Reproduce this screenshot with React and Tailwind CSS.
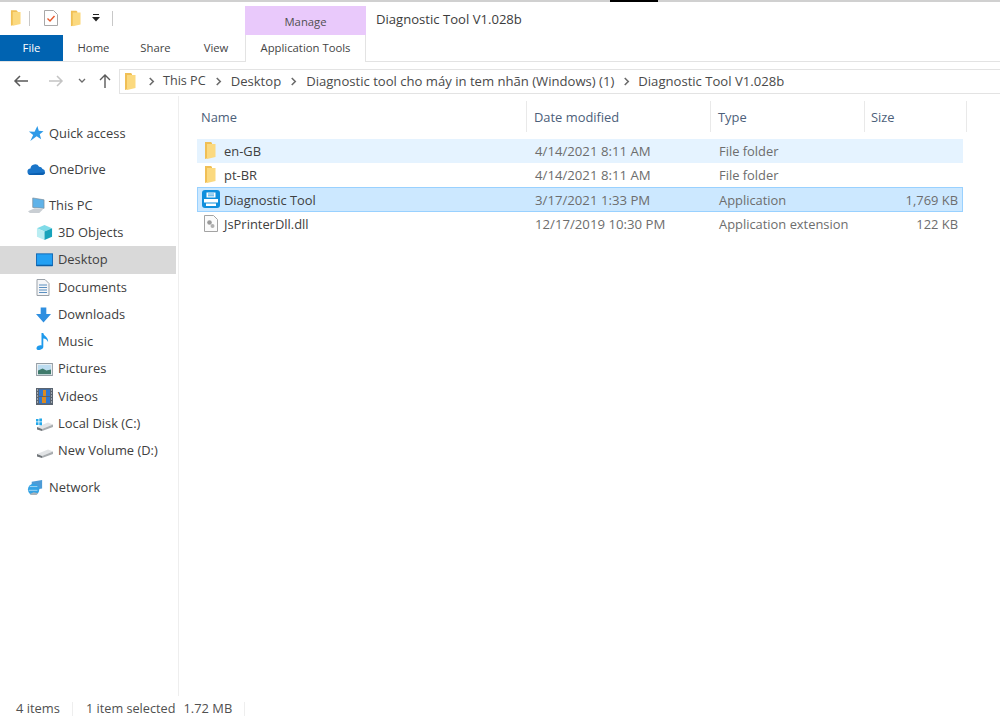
import * as React from 'react';

const FONT = 'font-["Open_Sans","Noto_Sans",sans-serif]';

function FolderIcon({ className = 'w-[12px] h-[17px]' }) {
  return (
    <svg viewBox="0 0 12 17" className={className}>
      <path d="M1 0h6l1 1v14l-7 2z" fill="#f0bf55" />
      <path d="M3 2h8.500v13L3 17z" fill="#fbd97f" />
    </svg>
  );
}

function Chevron() {
  return (
    <svg viewBox="0 0 8 10" className="w-[7px] h-[9px] shrink-0">
      <path d="M2 1l4 4-4 4" fill="none" stroke="#6b6b6b" strokeWidth="1.8" />
    </svg>
  );
}

function StarIcon() {
  return (
    <svg viewBox="0 0 18 18" className="w-[17px] h-[17px]">
      <path d="M11 1l1.500 5 5 .5-4 3.200 1.500 5.300-4.800-3-6.700 5 3-6.300-4.500-3.700 6 .2z" fill="#2f9be8" />
    </svg>
  );
}

function CloudIcon() {
  return (
    <svg viewBox="0 0 20 14" className="w-[19px] h-[13px]">
      <path d="M4 13a3.500 3.500 0 0 1-.5-7 5 5 0 0 1 9.300-2 4 4 0 0 1 3.700 2.500A3.300 3.300 0 0 1 16 13z" fill="#1a75c9" />
      <path d="M1 11.500a3.500 3.500 0 0 0 3 1.500h12a3.300 3.300 0 0 0 3.300-3z" fill="#0b5fb0" />
    </svg>
  );
}

function PcIcon() {
  return (
    <svg viewBox="0 0 20 18" className="w-[19px] h-[17px]">
      <path d="M6 1l12 2v9l-12-1z" fill="#5fb2e8" stroke="#7a8b99" strokeWidth=".7" />
      <path d="M1 15l7-3 9 1-4 4H3z" fill="#c9ced3" />
    </svg>
  );
}

function CubeIcon() {
  return (
    <svg viewBox="0 0 18 18" className="w-[17px] h-[17px]">
      <path d="M9 1l8 3.500L9 8 1 4.500z" fill="#7fdbe8" />
      <path d="M1 4.500L9 8v9l-8-3.500z" fill="#b9edf2" />
      <path d="M17 4.500L9 8v9l8-3.500z" fill="#17a3bb" />
    </svg>
  );
}

function DesktopIcon() {
  return (
    <svg viewBox="0 0 18 14" className="w-[17px] h-[14px]">
      <rect x=".5" y=".5" width="17" height="12.500" fill="#23a0f3" stroke="#1169b5" />
      <path d="M1 12h16v1.500H1z" fill="#0d5fa6" />
    </svg>
  );
}

function DocsIcon() {
  return (
    <svg viewBox="0 0 14 17" className="w-[14px] h-[17px]">
      <path d="M1 .5h8l4 4v12H1z" fill="#f5f6f8" stroke="#9aa1a8" />
      <path d="M3 6h8M3 8.500h8M3 11h8M3 13.500h8" stroke="#5a8fc0" strokeWidth="1" />
    </svg>
  );
}

function DownloadIcon() {
  return (
    <svg viewBox="0 0 16 16" className="w-[15px] h-[16px]">
      <path d="M5 0h6v7h5l-8 9-8-9h5z" fill="#2f8fe0" />
    </svg>
  );
}

function MusicIcon() {
  return (
    <svg viewBox="0 0 14 18" className="w-[14px] h-[18px]">
      <path d="M5.500 0h1.800c.3 3 5.700 4.500 4.700 9-.5-2-2.500-3.300-4.700-3.500V14c0 2.500-6.300 4.500-6.800 1.500-.3-2 3-3.700 5-3z" fill="#1f9aec" />
    </svg>
  );
}

function PicturesIcon() {
  return (
    <svg viewBox="0 0 18 14" className="w-[17px] h-[13px]">
      <rect x=".5" y=".5" width="17" height="13" fill="#eef2f5" stroke="#8d979f" />
      <rect x="2" y="2" width="14" height="10" fill="#bcdcf0" />
      <path d="M2 8l5-2 4 2 5-1v5H2z" fill="#3f7a6b" />
    </svg>
  );
}

function VideosIcon() {
  return (
    <svg viewBox="0 0 17 17" className="w-[17px] h-[17px]">
      <rect width="17" height="17" fill="#5a6470" />
      <rect x="3" y="1.500" width="11" height="6.500" fill="#2f77d0" />
      <rect x="3" y="9" width="11" height="6.500" fill="#2f77d0" />
      <path d="M7 2h3v6h-3zM6 9h4v6H6z" fill="#d98a22" />
      <path d="M1 2h1M1 5h1M1 8h1M1 11h1M1 14h1M15 2h1M15 5h1M15 8h1M15 11h1M15 14h1" stroke="#e8edf2" />
    </svg>
  );
}

function DriveIcon({ windows }) {
  return (
    <svg viewBox="0 0 18 14" className="w-[18px] h-[14px]">
      <path d="M1 10l11-4.500 5 2-11 4.500z" fill="#e2e4e6" />
      <path d="M1 10l5 2v2l-5-1.500z" fill="#6f7478" />
      <path d="M6 12l11-4.500v2.500L6 14z" fill="#a9adb0" />
      {windows ? (
        <path d="M0 2h2.500v2.500H0zM3.300 1.500H6v3H3.300zM0 5.300h2.500V8H0zM3.300 5.300H6v3H3.300z" fill="#22a7e8" />
      ) : null}
    </svg>
  );
}

function NetworkIcon() {
  return (
    <svg viewBox="0 0 18 18" className="w-[17px] h-[17px]">
      <path d="M5 3l11-2v9l-11 2z" fill="#4d9bd6" />
      <circle cx="7" cy="11" r="6" fill="#35a3e4" />
      <path d="M3 8h8M2 12h9" stroke="#d6eefa" strokeWidth=".7" />
      <path d="M3 16l4-2 5 1-2 2H4z" fill="#a9b3ba" />
    </svg>
  );
}

function PrinterIcon() {
  return (
    <svg viewBox="0 0 18 18" className="w-[18px] h-[18px]">
      <rect width="18" height="18" rx="3" fill="#0f8fdd" />
      <rect x="4.500" y="2.500" width="9" height="5" fill="#fff" />
      <path d="M6 4h6M6 5.800h6" stroke="#0f8fdd" strokeWidth=".8" />
      <path d="M2 9h14v3.500H2z" fill="#fff" />
      <path d="M4 13.500h10V16H4z" fill="#fff" />
    </svg>
  );
}

function DllIcon() {
  return (
    <svg viewBox="0 0 14 17" className="w-[14px] h-[17px]">
      <path d="M.5.500h9l4 4v12H.5z" fill="#fbfbfb" stroke="#a3a3a3" />
      <circle cx="5.500" cy="7.500" r="2.300" fill="#9a9a9a" />
      <circle cx="8.500" cy="11" r="2" fill="#b0b0b0" />
    </svg>
  );
}

const NAV = [
  { label: 'Quick access', icon: <StarIcon />, level: 0, h: 'h-[27px]', mt: '' },
  { label: 'OneDrive', icon: <CloudIcon />, level: 0, h: 'h-[27px]', mt: 'mt-[9px]' },
  { label: 'This PC', icon: <PcIcon />, level: 0, h: 'h-[27px]', mt: 'mt-[9px]' },
  { label: '3D Objects', icon: <CubeIcon />, level: 1, h: 'h-[27px]', mt: '' },
  { label: 'Desktop', icon: <DesktopIcon />, level: 1, h: 'h-[28px]', mt: '', active: true },
  { label: 'Documents', icon: <DocsIcon />, level: 1, h: 'h-[27px]', mt: '' },
  { label: 'Downloads', icon: <DownloadIcon />, level: 1, h: 'h-[27px]', mt: '' },
  { label: 'Music', icon: <MusicIcon />, level: 1, h: 'h-[27px]', mt: '' },
  { label: 'Pictures', icon: <PicturesIcon />, level: 1, h: 'h-[28px]', mt: '' },
  { label: 'Videos', icon: <VideosIcon />, level: 1, h: 'h-[27px]', mt: '' },
  { label: 'Local Disk (C:)', icon: <DriveIcon windows />, level: 1, h: 'h-[27px]', mt: '' },
  { label: 'New Volume (D:)', icon: <DriveIcon />, level: 1, h: 'h-[28px]', mt: '' },
  { label: 'Network', icon: <NetworkIcon />, level: 0, h: 'h-[27px]', mt: 'mt-[9px]' },
];

const FILES = [
  { name: 'en-GB', date: '4/14/2021 8:11 AM', type: 'File folder', size: '', icon: <FolderIcon />, pad: 'pl-[2px]', h: 'h-[24px]', row: 'bg-[#e5f3ff] border-[#e5f3ff]' },
  { name: 'pt-BR', date: '4/14/2021 8:11 AM', type: 'File folder', size: '', icon: <FolderIcon />, pad: 'pl-[2px]', h: 'h-[24px]', row: 'bg-white border-white' },
  { name: 'Diagnostic Tool', date: '3/17/2021 1:33 PM', type: 'Application', size: '1,769 KB', icon: <PrinterIcon />, pad: '', h: 'h-[25px]', row: 'bg-[#cce8ff] border-[#99d1ff]' },
  { name: 'JsPrinterDll.dll', date: '12/17/2019 10:30 PM', type: 'Application extension', size: '122 KB', icon: <DllIcon />, pad: 'pl-[2px]', h: 'h-[24px]', row: 'bg-white border-white' },
];

const COLUMNS = 'grid grid-cols-[330px_184px_154px_102px]';

export default function App() {
  return (
    <div className={`flex h-[720px] w-[1000px] flex-col overflow-hidden bg-white text-[12.900px] ${FONT}`}>
      {/* top edge of the window behind */}
      <div className="flex h-[2px] bg-[#d0d0d0]">
        <div className="w-[610px]" />
        <div className="w-[48px] bg-black" />
      </div>

      {/* quick access bar + title */}
      <div className="flex h-[33px]">
        <div className="flex w-[245px] items-center pl-[10px] pb-[1px]">
          <FolderIcon className="h-[16px] w-[11px]" />
          <div className="ml-[8px] h-[15px] w-px bg-[#c8c8c8]" />
          <svg viewBox="0 0 14 16" className="ml-[14px] h-[16px] w-[14px]">
            <path d="M.5.500h9l4 4v11H.5z" fill="#fff" stroke="#a8a8a8" />
            <path d="M3.500 8.500l2.500 2.500 4.500-5" fill="none" stroke="#e8582a" strokeWidth="1.400" />
          </svg>
          <FolderIcon className="ml-[12px] h-[17px] w-[11px]" />
          <svg viewBox="0 0 8 8" className="ml-[11px] h-[8px] w-[8px]">
            <path d="M1 .5h6" stroke="#222" />
            <path d="M0 3h8L4 7.500z" fill="#222" />
          </svg>
          <div className="ml-[12px] h-[15px] w-px bg-[#c8c8c8]" />
        </div>
        <div className="mt-[4px] flex w-[121px] items-center justify-center bg-[#e9c9fb] pt-[3px] text-[11.300px] text-[#505050]">
          Manage
        </div>
        <div className="ml-[10px] pt-[9px] text-[13.100px] leading-[17px] text-[#3c3c3c]">Diagnostic Tool V1.028b</div>
      </div>

      {/* ribbon tabs */}
      <div className="flex h-[27px] border-b border-[#e3e3e3] text-[11.300px] text-[#444]">
        <div className="flex w-[63px] items-center justify-center bg-[#0063b1] text-white">File</div>
        <div className="flex w-[61px] items-center justify-center">Home</div>
        <div className="flex w-[63px] items-center justify-center">Share</div>
        <div className="flex w-[58px] items-center justify-center">View</div>
        <div className="-mb-px flex w-[121px] items-center justify-center border-x border-[#e3e3e3] bg-white">Application Tools</div>
      </div>

      {/* address bar */}
      <div className="flex h-[34px] items-center pt-[4px]">
        <div className="flex w-[119px] items-center pl-[13px]">
          <svg viewBox="0 0 16 14" className="h-[14px] w-[16px]">
            <path d="M15 7H2M7 2L2 7l5 5" fill="none" stroke="#5a5a5a" strokeWidth="1.500" />
          </svg>
          <svg viewBox="0 0 16 14" className="ml-[19px] h-[14px] w-[16px]">
            <path d="M1 7h13M9 2l5 5-5 5" fill="none" stroke="#c4c4c4" strokeWidth="1.500" />
          </svg>
          <svg viewBox="0 0 8 6" className="ml-[14px] h-[6px] w-[8px]">
            <path d="M1 1l3 3 3-3" fill="none" stroke="#6b6b6b" strokeWidth="1.300" />
          </svg>
          <svg viewBox="0 0 14 16" className="ml-[12px] h-[16px] w-[14px]">
            <path d="M7 15V2M2 7l5-5 5 5" fill="none" stroke="#5a5a5a" strokeWidth="1.400" />
          </svg>
        </div>
        <div className="flex h-[25px] flex-1 items-center border-y border-l border-[#e3e3e3] pl-[4px] text-[13.100px] text-[#4a4a4a]">
          <FolderIcon className="h-[17px] w-[12px]" />
          <div className="ml-[12px]"><Chevron /></div>
          <span className="ml-[8px] pt-[1px] text-[12.600px]">This PC</span>
          <div className="ml-[9px]"><Chevron /></div>
          <span className="ml-[9px] pt-[1px]">Desktop</span>
          <div className="ml-[9px]"><Chevron /></div>
          <span className="ml-[9px] pt-[1px]">Diagnostic tool cho máy in tem nhãn (Windows) (1)</span>
          <div className="ml-[9px]"><Chevron /></div>
          <span className="ml-[8px] pt-[1px]">Diagnostic Tool V1.028b</span>
        </div>
      </div>

      {/* sidebar + file list */}
      <div className="flex flex-1 min-h-0">
        <nav className="w-[179px] shrink-0 border-r border-[#eeeeee] pt-[24px] pr-[2px] pb-[24px] text-[#404040]">
          {NAV.map((item) => (
            <div
              key={item.label}
              className={`flex items-center ${item.h} ${item.mt} ${item.level ? 'pl-[36px]' : 'pl-[27px]'} ${item.active ? 'bg-[#d9d9d9]' : ''}`}
            >
              <div className="flex w-[22px] shrink-0 items-center">{item.icon}</div>
              <span className="whitespace-nowrap">{item.label}</span>
            </div>
          ))}
        </nav>

        <main className="flex-1 pl-[18px] pt-[5px]">
          <div className={`${COLUMNS} h-[31px] w-[771px] text-[#4c607a]`}>
            <div className="flex items-center border-r border-[#e9e9e9] pl-[4px] pt-[2px]">Name</div>
            <div className="flex items-center border-r border-[#e9e9e9] pl-[7px] pt-[2px]">Date modified</div>
            <div className="flex items-center border-r border-[#e9e9e9] pl-[7px] pt-[2px]">Type</div>
            <div className="flex items-center border-r border-[#e9e9e9] pl-[6px] pt-[2px]">Size</div>
          </div>
          <div className="mt-[7px] w-[766px]">
            {FILES.map((file) => (
              <div key={file.name} className={`${COLUMNS} ${file.h} items-center border ${file.row} text-[#6d6d6d]`}>
                <div className="flex items-center pl-[4px] text-[#404040]">
                  <div className={`flex w-[22px] shrink-0 items-center ${file.pad}`}>{file.icon}</div>
                  <span className="pt-[2px]">{file.name}</span>
                </div>
                <div className="pl-[7px] pt-[2px] text-[13.200px]">{file.date}</div>
                <div className="pl-[7px] pt-[2px] whitespace-nowrap">{file.type}</div>
                <div className="pr-[10px] pt-[2px] text-right whitespace-nowrap">{file.size}</div>
              </div>
            ))}
          </div>
        </main>
      </div>

      {/* status bar */}
      <div className="flex h-[24px] items-center pt-[1px] text-[#505050]">
        <span className="ml-[16px] w-[56px]">4 items</span>
        <div className="h-[14px] w-px bg-[#eeeeee]" />
        <span className="ml-[13px] text-[12.700px]">1 item selected</span>
        <span className="ml-[8px]">1.72 MB</span>
        <div className="ml-[12px] h-[14px] w-px bg-[#eeeeee]" />
      </div>
    </div>
  );
}
